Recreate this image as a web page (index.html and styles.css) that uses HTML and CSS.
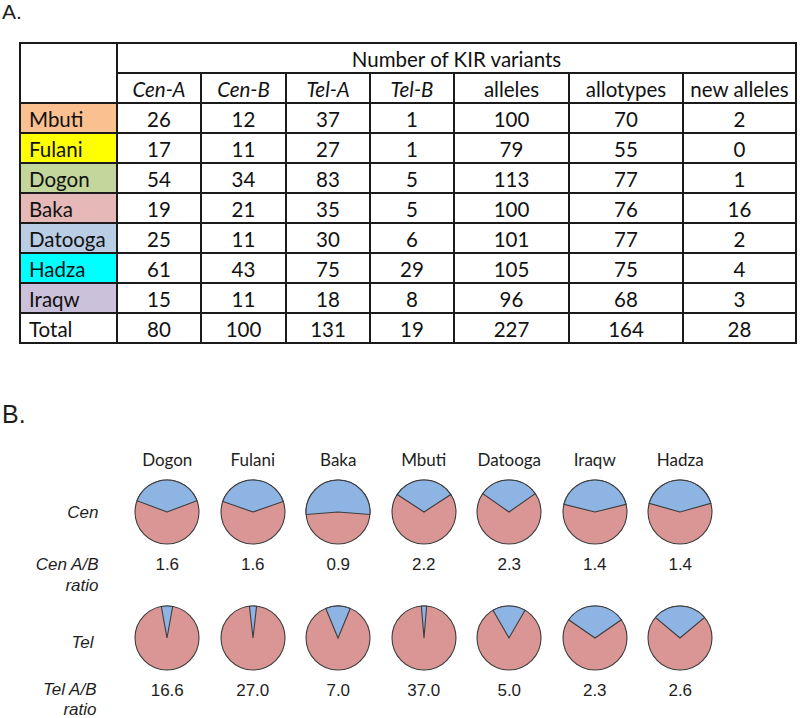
FILE: index.html
```html
<!DOCTYPE html>
<html lang="en">
<head>
<meta charset="utf-8">
<title>KIR variants</title>
<link rel="stylesheet" href="styles.css">
</head>
<body>
<section class="panel-a">
  <div class="panel-label">A.</div>
  <div class="kir-table">
    <div class="cell corner"></div>
    <div class="cell title">Number of KIR variants</div>
    <div class="cell it">Cen-A</div>
    <div class="cell it">Cen-B</div>
    <div class="cell it">Tel-A</div>
    <div class="cell it">Tel-B</div>
    <div class="cell">alleles</div>
    <div class="cell">allotypes</div>
    <div class="cell">new alleles</div>

    <div class="cell pop mbuti">Mbuti</div><div class="cell">26</div><div class="cell">12</div><div class="cell">37</div><div class="cell">1</div><div class="cell">100</div><div class="cell">70</div><div class="cell">2</div>
    <div class="cell pop fulani">Fulani</div><div class="cell">17</div><div class="cell">11</div><div class="cell">27</div><div class="cell">1</div><div class="cell">79</div><div class="cell">55</div><div class="cell">0</div>
    <div class="cell pop dogon">Dogon</div><div class="cell">54</div><div class="cell">34</div><div class="cell">83</div><div class="cell">5</div><div class="cell">113</div><div class="cell">77</div><div class="cell">1</div>
    <div class="cell pop baka">Baka</div><div class="cell">19</div><div class="cell">21</div><div class="cell">35</div><div class="cell">5</div><div class="cell">100</div><div class="cell">76</div><div class="cell">16</div>
    <div class="cell pop datooga">Datooga</div><div class="cell">25</div><div class="cell">11</div><div class="cell">30</div><div class="cell">6</div><div class="cell">101</div><div class="cell">77</div><div class="cell">2</div>
    <div class="cell pop hadza">Hadza</div><div class="cell">61</div><div class="cell">43</div><div class="cell">75</div><div class="cell">29</div><div class="cell">105</div><div class="cell">75</div><div class="cell">4</div>
    <div class="cell pop iraqw">Iraqw</div><div class="cell">15</div><div class="cell">11</div><div class="cell">18</div><div class="cell">8</div><div class="cell">96</div><div class="cell">68</div><div class="cell">3</div>
    <div class="cell pop">Total</div><div class="cell">80</div><div class="cell">100</div><div class="cell">131</div><div class="cell">19</div><div class="cell">227</div><div class="cell">164</div><div class="cell">28</div>
  </div>
</section>

<section class="panel-b">
  <div class="panel-label b-label">B.</div>
  <div class="pie-grid">
    <div class="rowlabel"></div>
    <div class="name">Dogon</div>
    <div class="name">Fulani</div>
    <div class="name">Baka</div>
    <div class="name">Mbuti</div>
    <div class="name">Datooga</div>
    <div class="name">Iraqw</div>
    <div class="name">Hadza</div>

    <div class="rowlabel mid">Cen</div>
    <div class="piecell"><svg class="pie" viewBox="0 0 66 66" width="66" height="66"><circle class="a" cx="33" cy="33" r="32"/><path class="b" d="M33 33 L3.08 21.65 A32 32 0 0 1 62.92 21.65 Z"/></svg></div>
    <div class="piecell"><svg class="pie" viewBox="0 0 66 66" width="66" height="66"><circle class="a" cx="33" cy="33" r="32"/><path class="b" d="M33 33 L2.80 22.43 A32 32 0 0 1 63.20 22.43 Z"/></svg></div>
    <div class="piecell"><svg class="pie" viewBox="0 0 66 66" width="66" height="66"><circle class="a" cx="33" cy="33" r="32"/><path class="b" d="M33 33 L1.10 35.51 A32 32 0 1 1 64.90 35.51 Z"/></svg></div>
    <div class="piecell"><svg class="pie" viewBox="0 0 66 66" width="66" height="66"><circle class="a" cx="33" cy="33" r="32"/><path class="b" d="M33 33 L6.21 15.50 A32 32 0 0 1 59.79 15.50 Z"/></svg></div>
    <div class="piecell"><svg class="pie" viewBox="0 0 66 66" width="66" height="66"><circle class="a" cx="33" cy="33" r="32"/><path class="b" d="M33 33 L6.79 14.64 A32 32 0 0 1 59.21 14.64 Z"/></svg></div>
    <div class="piecell"><svg class="pie" viewBox="0 0 66 66" width="66" height="66"><circle class="a" cx="33" cy="33" r="32"/><path class="b" d="M33 33 L1.93 25.34 A32 32 0 0 1 64.07 25.34 Z"/></svg></div>
    <div class="piecell"><svg class="pie" viewBox="0 0 66 66" width="66" height="66"><circle class="a" cx="33" cy="33" r="32"/><path class="b" d="M33 33 L2.17 24.40 A32 32 0 0 1 63.83 24.40 Z"/></svg></div>

    <div class="rowlabel">Cen A/B<br>ratio</div>
    <div class="val">1.6</div>
    <div class="val">1.6</div>
    <div class="val">0.9</div>
    <div class="val">2.2</div>
    <div class="val">2.3</div>
    <div class="val">1.4</div>
    <div class="val">1.4</div>

    <div class="rowlabel mid tel">Tel</div>
    <div class="piecell"><svg class="pie" viewBox="0 0 66 66" width="66" height="66"><circle class="a" cx="33" cy="33" r="32"/><path class="b" d="M33 33 L27.32 1.51 A32 32 0 0 1 38.68 1.51 Z"/></svg></div>
    <div class="piecell"><svg class="pie" viewBox="0 0 66 66" width="66" height="66"><circle class="a" cx="33" cy="33" r="32"/><path class="b" d="M33 33 L29.42 1.20 A32 32 0 0 1 36.58 1.20 Z"/></svg></div>
    <div class="piecell"><svg class="pie" viewBox="0 0 66 66" width="66" height="66"><circle class="a" cx="33" cy="33" r="32"/><path class="b" d="M33 33 L20.75 3.44 A32 32 0 0 1 45.25 3.44 Z"/></svg></div>
    <div class="piecell"><svg class="pie" viewBox="0 0 66 66" width="66" height="66"><circle class="a" cx="33" cy="33" r="32"/><path class="b" d="M33 33 L30.36 1.11 A32 32 0 0 1 35.64 1.11 Z"/></svg></div>
    <div class="piecell"><svg class="pie" viewBox="0 0 66 66" width="66" height="66"><circle class="a" cx="33" cy="33" r="32"/><path class="b" d="M33 33 L17 5.29 A32 32 0 0 1 49 5.29 Z"/></svg></div>
    <div class="piecell"><svg class="pie" viewBox="0 0 66 66" width="66" height="66"><circle class="a" cx="33" cy="33" r="32"/><path class="b" d="M33 33 L6.66 14.82 A32 32 0 0 1 59.34 14.82 Z"/></svg></div>
    <div class="piecell"><svg class="pie" viewBox="0 0 66 66" width="66" height="66"><circle class="a" cx="33" cy="33" r="32"/><path class="b" d="M33 33 L8.41 12.52 A32 32 0 0 1 57.59 12.52 Z"/></svg></div>

    <div class="rowlabel last">Tel A/B<br>ratio</div>
    <div class="val">16.6</div>
    <div class="val">27.0</div>
    <div class="val">7.0</div>
    <div class="val">37.0</div>
    <div class="val">5.0</div>
    <div class="val">2.3</div>
    <div class="val">2.6</div>
  </div>
</section>
</body>
</html>
```

FILE: styles.css
```css
html, body {
  margin: 0;
  padding: 0;
  background: #ffffff;
  color: #1e1e1e;
}

body {
  width: 800px;
  height: 718px;
  overflow: hidden;
  font-family: "Liberation Sans", Arial, sans-serif;
}

.panel-label {
  font-family: "Liberation Sans", Arial, sans-serif;
  font-size: 21px;
  line-height: 24px;
  padding-left: 2px;
  color: #1e1e1e;
}

/* ---------- Table (panel A) ---------- */
.kir-table {
  margin: 18px 0 0 19px;
  display: grid;
  grid-template-columns: 97px 84px 85px 84px 84px 115px 114px 113px;
  grid-auto-rows: 30px;
  width: max-content;
  border-top: 2px solid #1a1a1a;
  border-left: 2px solid #1a1a1a;
  font-family: Lato, "Open Sans", sans-serif;
  font-size: 20.5px;
  color: #111;
}

.cell {
  box-sizing: border-box;
  border-right: 2px solid #1a1a1a;
  border-bottom: 2px solid #1a1a1a;
  padding-top: 3px;
  line-height: 25px;
  text-align: center;
  white-space: nowrap;
}

.corner {
  grid-row: span 2;
}

.title {
  grid-column: span 7;
}

.it {
  font-style: italic;
}

.pop {
  text-align: left;
  padding-left: 8px;
}

.mbuti { background: #fac090; }
.fulani { background: #ffff00; }
.dogon { background: #c3d69b; }
.baka { background: #e6b9b8; }
.datooga { background: #b9cde5; }
.hadza { background: #00ffff; }
.iraqw { background: #ccc1da; }

/* ---------- Pies (panel B) ---------- */
.b-label {
  margin-top: 56px;
  font-size: 25px;
  line-height: 28px;
}

.pie-grid {
  margin-top: 22px;
  display: grid;
  grid-template-columns: 124.5px repeat(7, 85.5px);
  grid-template-rows: 20px 66px 42px 66px 36px;
  row-gap: 9px;
}

.name {
  font-family: Lato, "Open Sans", sans-serif;
  font-size: 17px;
  line-height: 20px;
  text-align: center;
  color: #1e1e1e;
}

.rowlabel {
  font-family: "Liberation Sans", Arial, sans-serif;
  font-style: italic;
  font-size: 17px;
  line-height: 21px;
  text-align: right;
  padding-right: 26px;
  color: #1e1e1e;
}

.rowlabel.mid {
  align-self: center;
}

.rowlabel.tel {
  padding-top: 8px;
  padding-right: 31px;
}

.rowlabel.last {
  line-height: 20px;
  padding-right: 28px;
}

.val {
  font-family: "Liberation Sans", Arial, sans-serif;
  font-size: 17px;
  line-height: 21px;
  text-align: center;
  color: #1e1e1e;
}

.piecell {
  display: flex;
  justify-content: center;
}

.pie {
  display: block;
}

.pie .a {
  fill: #d99694;
  stroke: #3c3c3c;
  stroke-width: 1.1;
}

.pie .b {
  fill: #8eb4e3;
  stroke: #3c3c3c;
  stroke-width: 1.1;
  stroke-linejoin: miter;
}
```
